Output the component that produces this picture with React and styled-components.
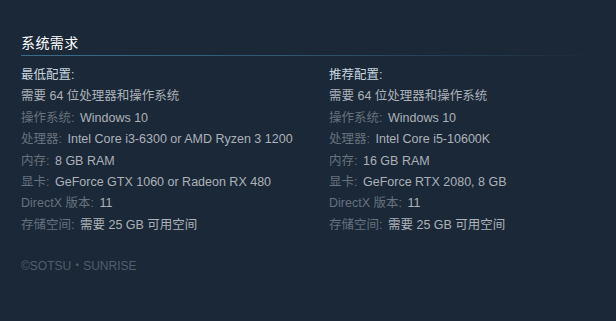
import React from "react";
import styled, { createGlobalStyle } from "styled-components";

const GlobalStyle = createGlobalStyle`
  html, body {
    margin: 0;
    padding: 0;
    background: #1b2838;
  }
  body {
    font-family: "Liberation Sans", Arial, "Noto Sans CJK SC", sans-serif;
  }
`;

const specs = [
  {
    title: "最低配置:",
    note: "需要 64 位处理器和操作系统",
    rows: [
      ["操作系统:", "Windows 10"],
      ["处理器:", "Intel Core i3-6300 or AMD Ryzen 3 1200"],
      ["内存:", "8 GB RAM"],
      ["显卡:", "GeForce GTX 1060 or Radeon RX 480"],
      ["DirectX 版本:", "11"],
      ["存储空间:", "需要 25 GB 可用空间"],
    ],
  },
  {
    title: "推荐配置:",
    note: "需要 64 位处理器和操作系统",
    rows: [
      ["操作系统:", "Windows 10"],
      ["处理器:", "Intel Core i5-10600K"],
      ["内存:", "16 GB RAM"],
      ["显卡:", "GeForce RTX 2080, 8 GB"],
      ["DirectX 版本:", "11"],
      ["存储空间:", "需要 25 GB 可用空间"],
    ],
  },
];

export default function App() {
  return (
    <>
      <GlobalStyle />
      <Page>
        <Heading>系统需求</Heading>
        <Columns>
          {specs.map((col) => (
            <List key={col.title}>
              <Item>
                <Title>{col.title}</Title>
              </Item>
              <Item>{col.note}</Item>
              {col.rows.map(([label, value]) => (
                <Item key={label}>
                  <Label>{label}</Label> {value}
                </Item>
              ))}
            </List>
          ))}
        </Columns>
        <Legal>©SOTSU・SUNRISE</Legal>
      </Page>
    </>
  );
}

const Page = styled("div")`
  width: 616px;
  height: 321px;
  box-sizing: border-box;
  padding: 32px 0 0 21px;
  background-color: #1b2838;
`;

const Heading = styled("h2")`
  margin: 0 21px 0 0;
  padding-bottom: 3px;
  font-size: 14px;
  font-weight: normal;
  line-height: 20px;
  color: #ffffff;
  letter-spacing: 0.03em;
  font-family: "Noto Sans CJK SC", sans-serif;
  border-bottom: 1px solid transparent;
  border-image: linear-gradient(to right, #3b6e8c 0%, #2e5068 55%, rgba(27, 40, 56, 0) 100%) 1;
`;

const Columns = styled("div")`
  display: grid;
  grid-template-columns: 308px 1fr;
  margin-top: 9px;
`;

const List = styled("ul")`
  margin: 0;
  padding: 0;
  list-style: none;
`;

const Item = styled("li")`
  font-size: 12.5px;
  line-height: 21.4px;
  color: #acb2b8;
  white-space: nowrap;
`;

const Title = styled("strong")`
  font-weight: normal;
  color: #c6d4df;
`;

const Label = styled("span")`
  margin-right: 2px;
  color: #66727d;
`;

const Legal = styled("div")`
  margin-top: 22px;
  font-size: 12px;
  line-height: 16px;
  color: #4f5e6b;
`;
